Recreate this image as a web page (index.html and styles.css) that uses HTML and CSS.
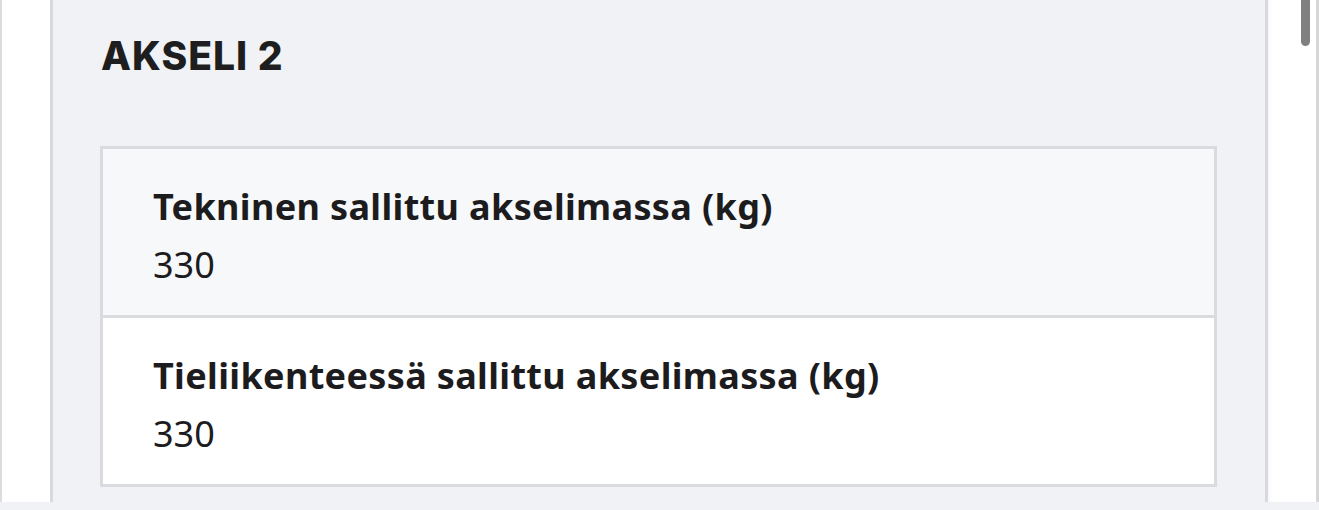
FILE: index.html
```html
<!DOCTYPE html>
<html lang="fi">
<head>
  <meta charset="UTF-8" />
  <title>Akseli 2</title>
  <link rel="stylesheet" href="styles.css">
</head>
<body>
  <div class="page">
    <div class="side side-left"></div>
    <div class="panel">
      <h2 class="axle-title">AKSELI 2</h2>
      <div class="spec-card">
        <div class="spec-row shaded">
          <div class="spec-label">Tekninen sallittu akselimassa (kg)</div>
          <div class="spec-value">330</div>
        </div>
        <div class="spec-row">
          <div class="spec-label">Tieliikenteessä sallittu akselimassa (kg)</div>
          <div class="spec-value">330</div>
        </div>
      </div>
    </div>
    <div class="side side-right">
      <div class="scroll-thumb"></div>
    </div>
  </div>
</body>
</html>
```

FILE: styles.css
```css
html, body {
  margin: 0;
  padding: 0;
  height: 100%;
  overflow: hidden;
}
body {
  background: #f1f2f6;
  font-family: "Noto Sans", "Open Sans", sans-serif;
  color: #1c1c1e;
}
.page {
  display: flex;
  height: 502px;
}
.side {
  background: #fff;
  width: 48px;
}
.side-left {
  border-left: 2px solid #dcdcdc;
}
.side-right {
  border-right: 3px solid #d6d6d6;
  position: relative;
  box-shadow: inset 6px 0 6px -6px rgba(0, 0, 0, 0.06);
}
.scroll-thumb {
  position: absolute;
  top: 0;
  left: 33px;
  width: 9px;
  height: 46px;
  background: #808080;
  border-radius: 0 0 5px 5px;
}
.panel {
  flex: 1;
  background: #f1f2f6;
  border-left: 3px solid #d8d9dc;
  border-right: 3px solid #d8d9dc;
  padding: 32px 48px 0 47px;
}
.axle-title {
  margin: 0 0 66px 1px;
  font-family: "Inter", "Lato", sans-serif;
  font-weight: 800;
  font-size: 39px;
  line-height: 48px;
  letter-spacing: 1px;
  color: #1e1e20;
}
.spec-card {
  border: 3px solid #dadbde;
  background: #fff;
}
.spec-row {
  padding: 29px 50px 22px;
  font-size: 36px;
  line-height: 1.6;
}
.spec-row + .spec-row {
  border-top: 3px solid #dadbde;
}
.spec-row.shaded {
  background: #f7f8fa;
}
.spec-label {
  font-weight: 700;
  letter-spacing: 0.35px;
}
```
